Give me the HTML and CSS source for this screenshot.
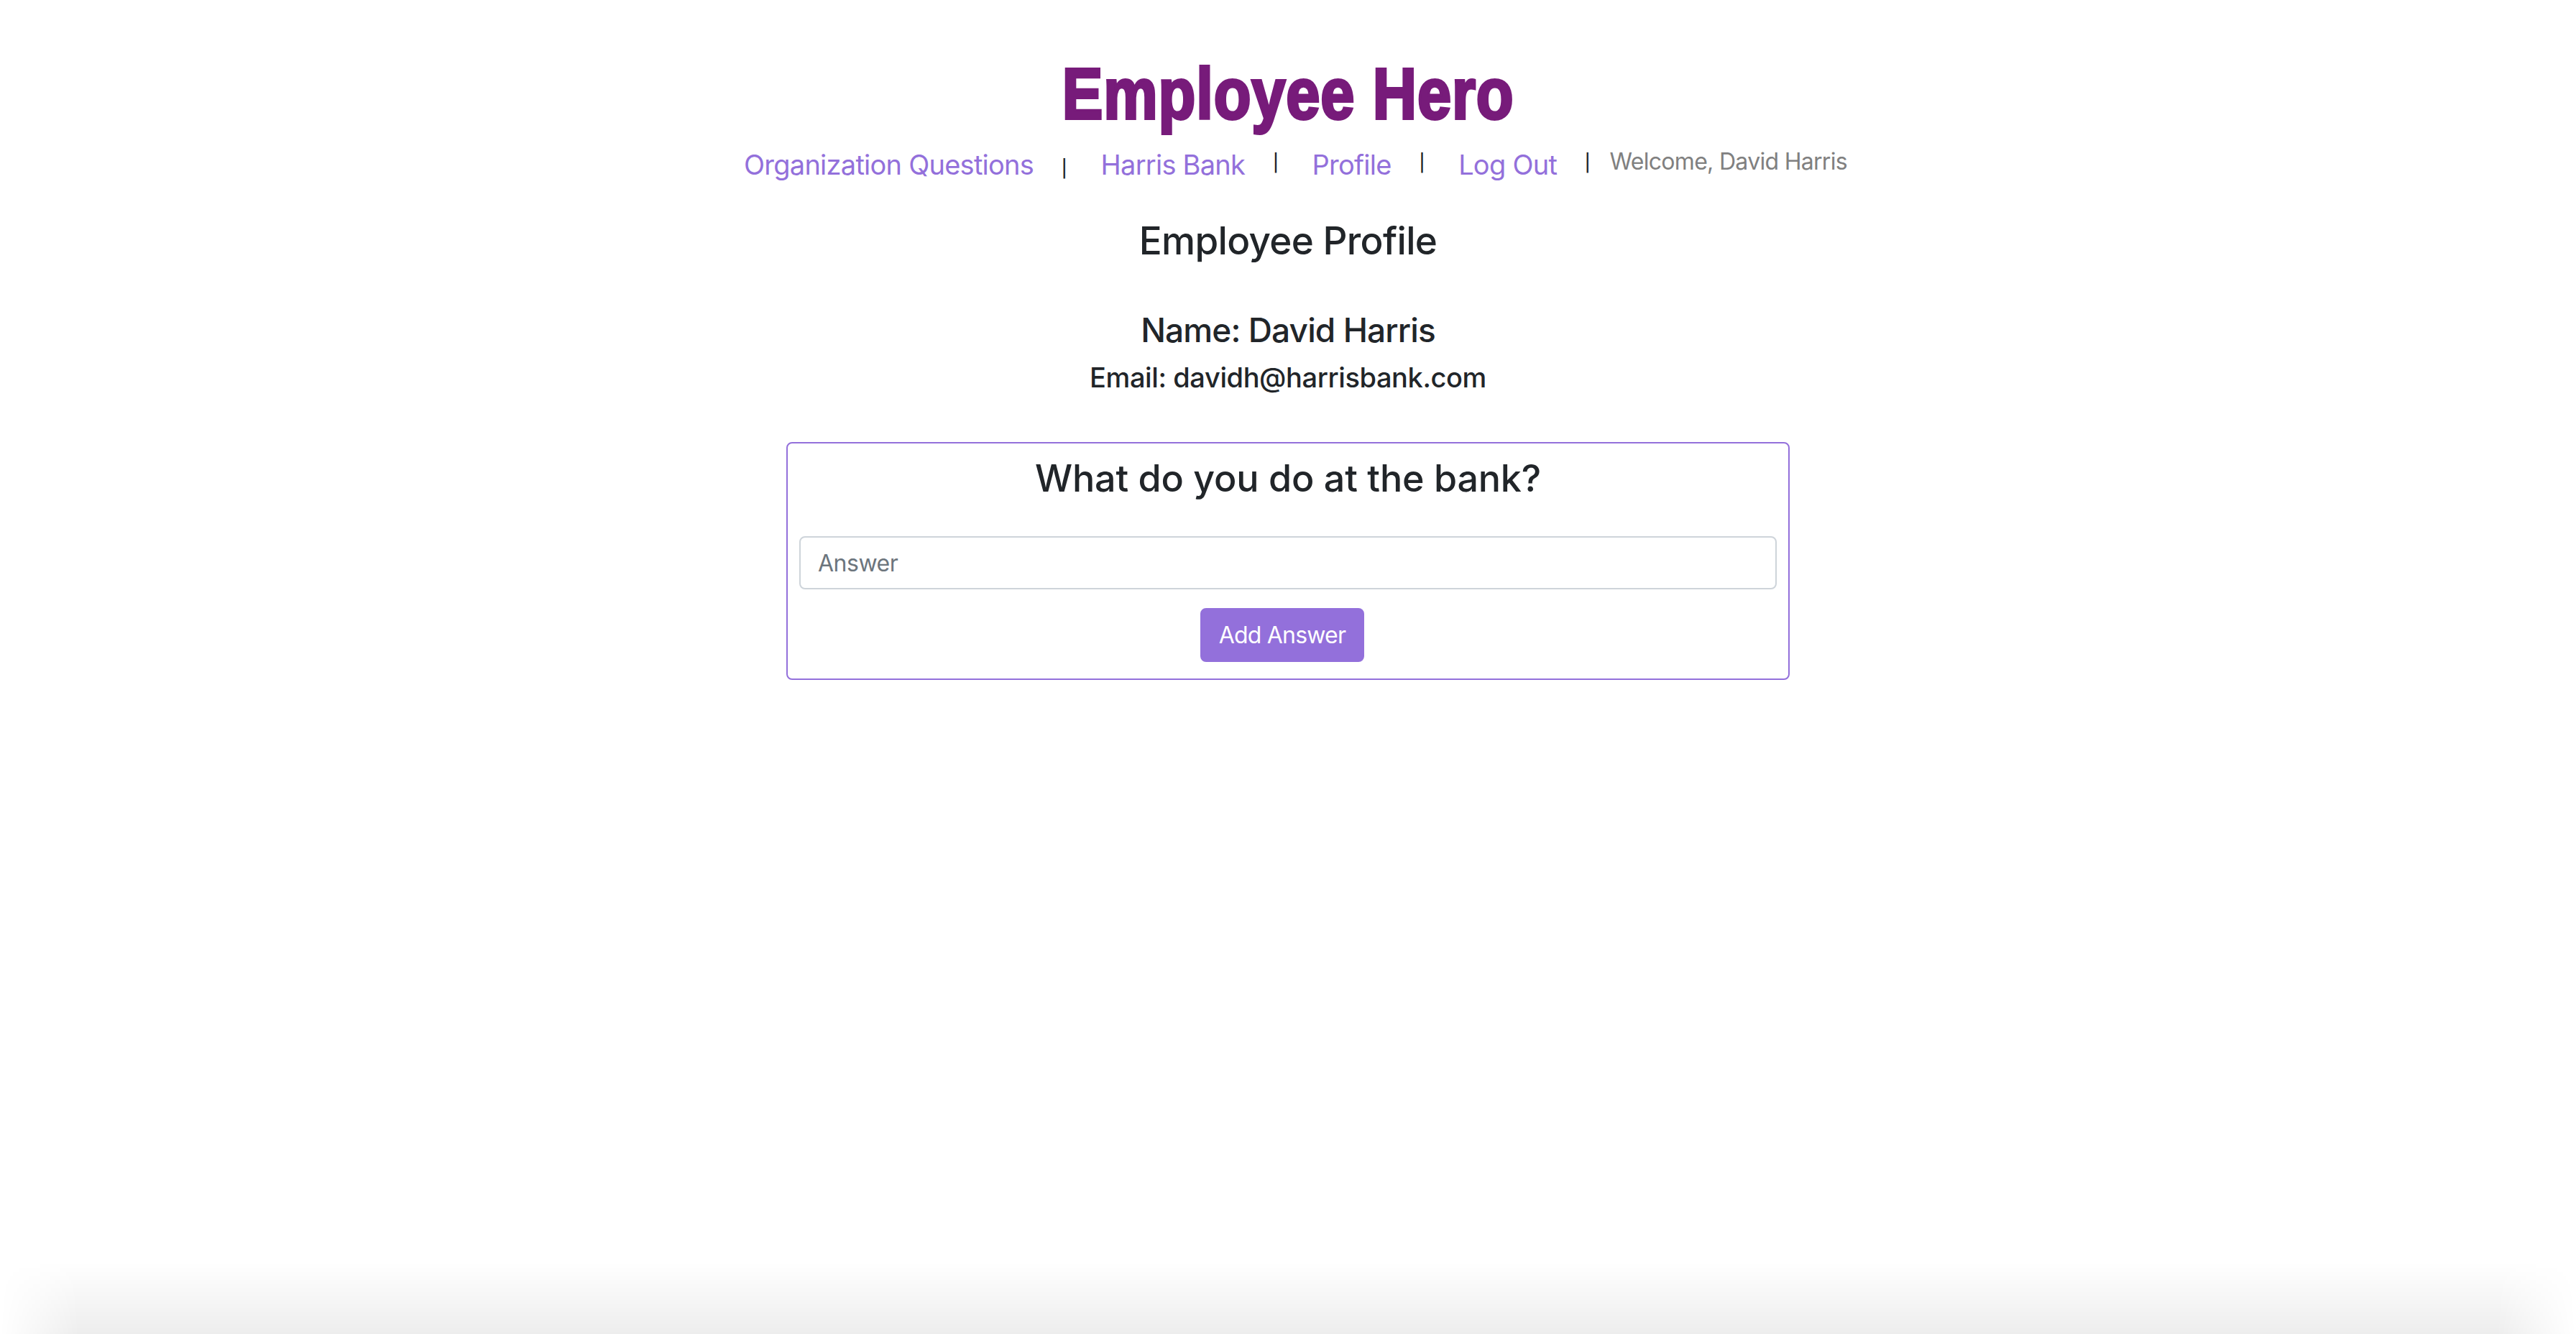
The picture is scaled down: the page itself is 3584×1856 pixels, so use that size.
FILE: index.html
```html
<!DOCTYPE html>
<html lang="en">
<head>
<meta charset="utf-8">
<title>Employee Hero</title>
<link rel="stylesheet" href="styles.css">
</head>
<body>
<header class="site-header">
  <h1 class="brand"><span class="brand-text">Employee Hero</span></h1>
  <nav class="nav">
    <a class="nav-link" href="#">Organization Questions</a>
    <span class="sep sep-low">|</span>
    <a class="nav-link" href="#">Harris Bank</a>
    <span class="sep">|</span>
    <a class="nav-link" href="#">Profile</a>
    <span class="sep">|</span>
    <a class="nav-link" href="#">Log Out</a>
    <span class="sep sep-last">|</span>
    <span class="welcome">Welcome, David Harris</span>
  </nav>
</header>
<main class="profile">
  <h2 class="profile-title">Employee Profile</h2>
  <h3 class="profile-name">Name: David Harris</h3>
  <h4 class="profile-email">Email: davidh@harrisbank.com</h4>
  <form class="question-card">
    <h3 class="question-title">What do you do at the bank?</h3>
    <input class="answer-input" type="text" placeholder="Answer">
    <div class="actions">
      <button class="btn-add" type="button">Add Answer</button>
    </div>
  </form>
</main>
<div class="window-shade"></div>
</body>
</html>
```
FILE: styles.css
```css
html, body {
  margin: 0;
  padding: 0;
  background: #ffffff;
}

body {
  font-family: Inter, "Noto Sans", "Liberation Sans", sans-serif;
  color: #212529;
  text-align: center;
  min-height: 1856px;
}

.site-header {
  display: flex;
  flex-direction: column;
  align-items: center;
}

.brand {
  margin: 80px 0 0;
  font-family: "Liberation Sans", Arial, sans-serif;
  font-weight: 700;
  font-size: 101px;
  line-height: 101px;
  height: 104px;
  color: #771b7a;
}

.brand-text {
  display: inline-block;
  transform: scaleX(0.84);
  transform-origin: center;
  -webkit-text-stroke: 4px #771b7a;
  letter-spacing: 1px;
}

.nav {
  display: flex;
  justify-content: center;
  align-items: flex-start;
  margin-top: 17px;
  padding-left: 21px;
}

.nav-link {
  font-size: 38px;
  line-height: 57px;
  letter-spacing: -0.75px;
  color: #9370db;
  text-decoration: none;
  white-space: nowrap;
}

.sep {
  font-family: "DejaVu Sans", sans-serif;
  font-size: 28px;
  line-height: 48px;
  color: #212529;
  margin: 0 46px 0 38px;
}

.sep-low {
  margin-top: 8px;
}

.sep-last {
  margin-right: 26px;
}

.welcome {
  font-size: 32px;
  line-height: 48px;
  letter-spacing: -0.7px;
  color: #808080;
  white-space: nowrap;
}

.profile {
  display: flex;
  flex-direction: column;
  align-items: center;
}

.profile-title {
  margin: 44px 0 0;
  font-size: 53px;
  line-height: 66px;
  letter-spacing: -0.7px;
  font-weight: 500;
}

.profile-name {
  margin: 63px 0 0;
  font-size: 46px;
  line-height: 57.6px;
  letter-spacing: -0.9px;
  font-weight: 500;
}

.profile-email {
  margin: 12px 0 0;
  font-size: 38px;
  line-height: 48px;
  letter-spacing: -0.4px;
  font-weight: 500;
}

.question-card {
  box-sizing: border-box;
  width: 1396px;
  margin: 66px 0 0;
  padding: 16px 16px 16px;
  border: 2px solid #9370db;
  border-radius: 8px;
}

.question-title {
  margin: 1px 0 0;
  font-size: 52px;
  line-height: 64.8px;
  letter-spacing: -0.2px;
  font-weight: 500;
}

.answer-input {
  display: block;
  box-sizing: border-box;
  width: 100%;
  height: 74px;
  margin: 48px 0 0;
  padding: 0 24px;
  border: 2px solid #ced4da;
  border-radius: 8px;
  font-family: Inter, "Noto Sans", sans-serif;
  font-size: 32px;
  letter-spacing: -0.5px;
  color: #495057;
  background: #fff;
  outline: none;
}

.answer-input::placeholder {
  color: #6c757d;
  opacity: 1;
}

.actions {
  margin: 26px 0 7px;
  text-align: center;
}

.btn-add {
  display: inline-block;
  margin-right: 16px;
  padding: 12px 24px;
  font-family: Inter, "Noto Sans", sans-serif;
  font-size: 32px;
  line-height: 47px;
  letter-spacing: -0.8px;
  color: #ffffff;
  background: #9370db;
  border: 2px solid #9370db;
  border-radius: 8px;
  cursor: pointer;
}

.window-shade {
  position: fixed;
  left: 0;
  right: 0;
  bottom: 0;
  height: 100px;
  pointer-events: none;
  background: linear-gradient(to bottom, rgba(0, 0, 0, 0), rgba(0, 0, 0, 0.07));
  -webkit-mask-image: linear-gradient(to right, transparent 0, #000 110px, #000 calc(100% - 110px), transparent 100%);
  mask-image: linear-gradient(to right, transparent 0, #000 110px, #000 calc(100% - 110px), transparent 100%);
}
```
